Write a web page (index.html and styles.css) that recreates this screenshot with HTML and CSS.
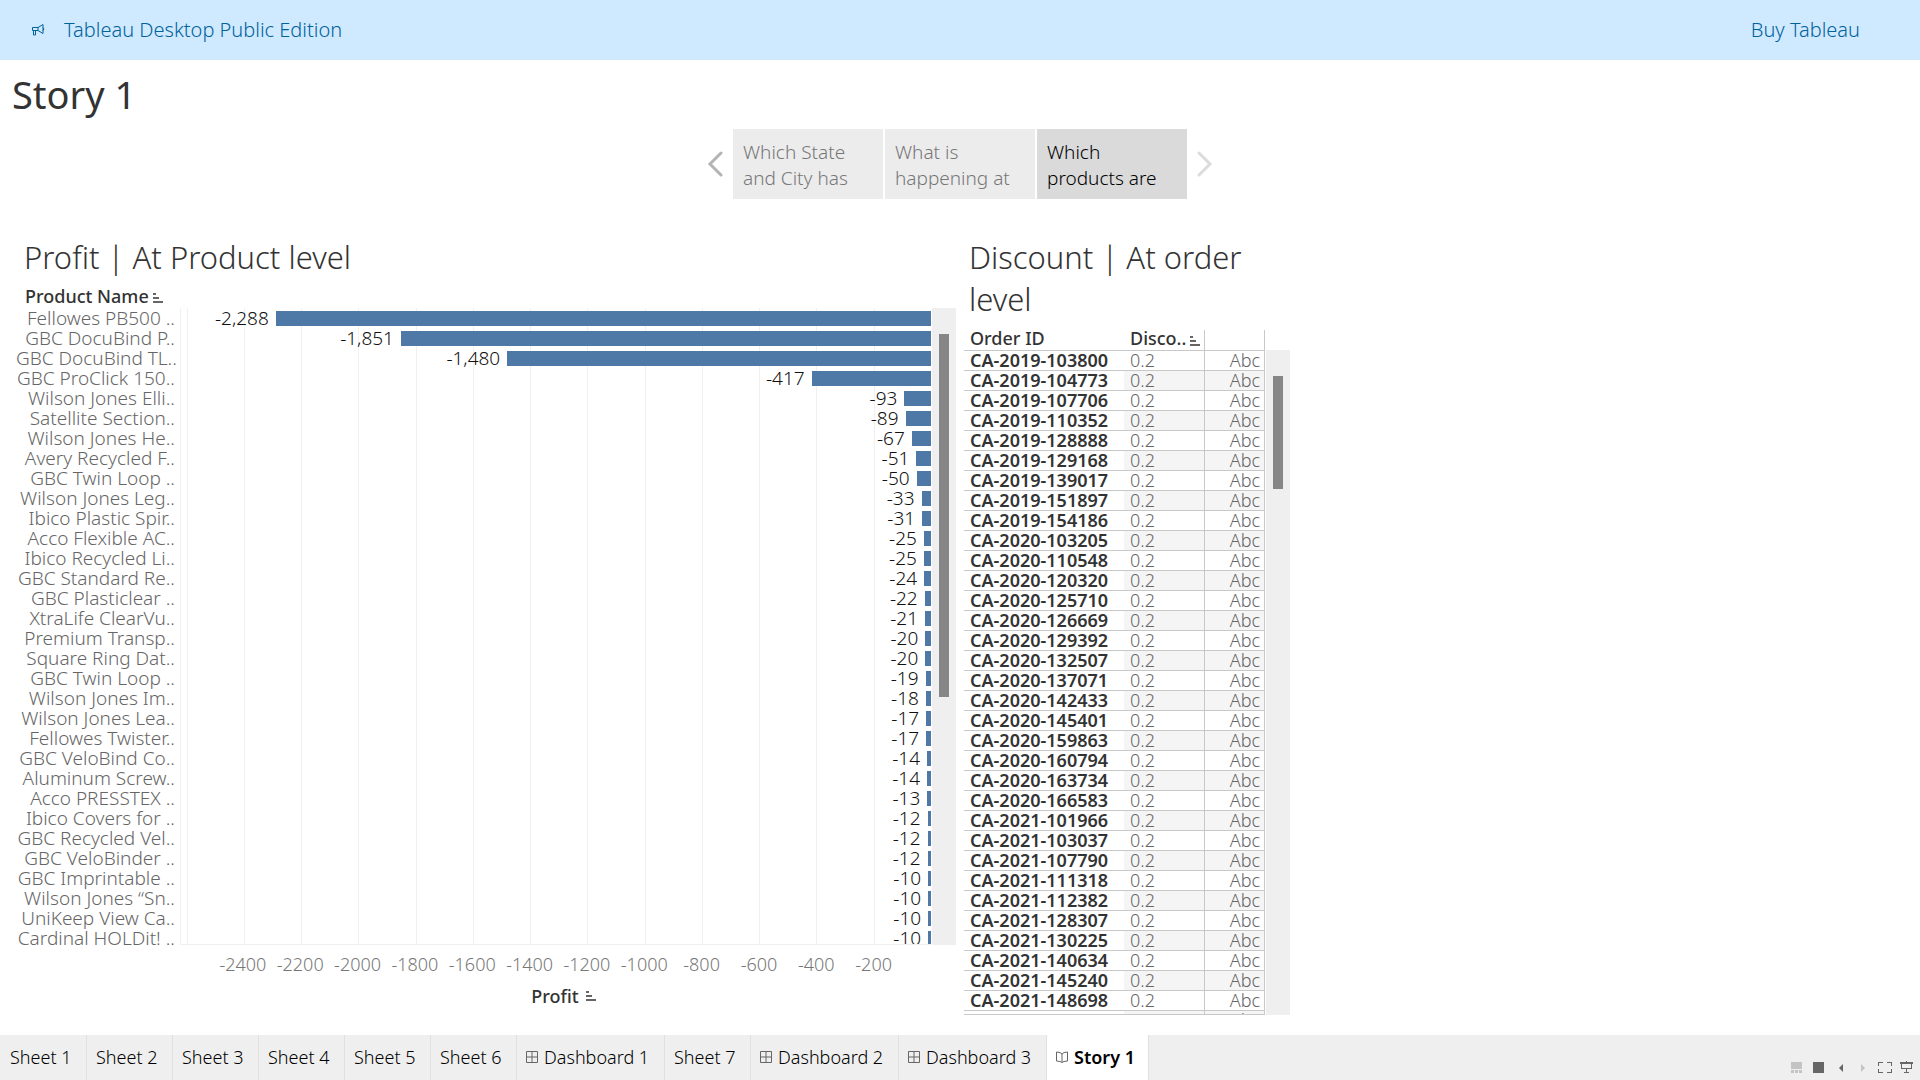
FILE: index.html
```html
<!DOCTYPE html>
<html lang="en">
<head>
<meta charset="utf-8">
<meta name="viewport" content="width=device-width, initial-scale=1">
<title>Story 1</title>
<link rel="stylesheet" href="styles.css">
</head>
<body>
<div class="app">
  <header class="banner">
    <svg class="banner-icon" viewBox="0 0 14 14" width="14" height="14" aria-hidden="true"><path d="M1.500 4.500H7L12 1.500v9L7 7.500H1.500zM7 4.500v3M2.500 7.500v4.500h2V7.500M12 4.500q2 1.500 0 3"/></svg>
    <span class="banner-title">Tableau Desktop Public Edition</span>
    <a class="banner-link" href="#buy">Buy Tableau</a>
  </header>

  <main class="story">
    <h1 class="story-title">Story 1</h1>

    <nav class="points" aria-label="Story points">
      <button class="point-arrow" type="button" aria-label="Previous"><svg viewBox="0 0 16 26" width="16" height="26"><path d="M14 2L3 13l11 11"/></svg></button>
      <div class="point-list">
        <button class="point" type="button">Which State<br>and City has</button>
        <button class="point" type="button">What is<br>happening at</button>
        <button class="point point-active" type="button">Which<br>products are</button>
      </div>
      <button class="point-arrow" type="button" aria-label="Next" disabled><svg viewBox="0 0 16 26" width="16" height="26"><path d="M2 2l11 11L2 24"/></svg></button>
    </nav>

    <div class="sheets">
      <section class="sheet profit">
        <h2 class="sheet-title">Profit | At Product level</h2>
        <div class="field-head">Product Name<svg class="sort" viewBox="0 0 10 10" width="10" height="10" aria-hidden="true"><path d="M0 0h3v2H0zM0 4h6v2H0zM0 8h10v2H0z"/></svg></div>
        <div class="chart">
          <div class="names" id="names"></div>
          <div class="plot">
            <div class="grid" id="grid"></div>
            <div class="bars" id="bars"></div>
          </div>
          <div class="track"><div class="thumb thumb-long"></div></div>
        </div>
        <div class="axis"><div class="ticks" id="ticks"></div></div>
        <div class="axis-title">Profit<svg class="sort" viewBox="0 0 10 10" width="10" height="10" aria-hidden="true"><path d="M0 0h3v2H0zM0 4h6v2H0zM0 8h10v2H0z"/></svg></div>
      </section>

      <section class="sheet discount">
        <h2 class="sheet-title">Discount | At order level</h2>
        <div class="orders">
          <div class="orders-view">
            <table class="orders-table">
              <thead><tr><th class="col-id" scope="col">Order ID</th><th class="col-disc" scope="col"><span class="disc-head">Disco..<svg class="sort" viewBox="0 0 10 10" width="10" height="10" aria-hidden="true"><path d="M0 0h3v2H0zM0 4h6v2H0zM0 8h10v2H0z"/></svg></span></th><td class="col-abc"></td></tr></thead>
              <tbody id="orders"></tbody>
            </table>
          </div>
          <div class="track track-orders"><div class="thumb thumb-short"></div></div>
        </div>
      </section>
    </div>
  </main>

  <footer class="footer">
    <nav class="tabs" aria-label="Sheets">
      <a class="tab" href="#s1">Sheet 1</a>
      <a class="tab" href="#s2">Sheet 2</a>
      <a class="tab" href="#s3">Sheet 3</a>
      <a class="tab" href="#s4">Sheet 4</a>
      <a class="tab" href="#s5">Sheet 5</a>
      <a class="tab" href="#s6">Sheet 6</a>
      <a class="tab tab-dash" href="#d1"><svg class="tab-icon" viewBox="0 0 12 12" width="12" height="12"><path d="M.5.5h11v11H.5zM6 .5v11M.5 6h11"/></svg>Dashboard 1</a>
      <a class="tab" href="#s7">Sheet 7</a>
      <a class="tab tab-dash" href="#d2"><svg class="tab-icon" viewBox="0 0 12 12" width="12" height="12"><path d="M.5.5h11v11H.5zM6 .5v11M.5 6h11"/></svg>Dashboard 2</a>
      <a class="tab tab-dash" href="#d3"><svg class="tab-icon" viewBox="0 0 12 12" width="12" height="12"><path d="M.5.5h11v11H.5zM6 .5v11M.5 6h11"/></svg>Dashboard 3</a>
      <a class="tab tab-active" href="#st1" aria-current="page"><svg class="tab-icon" viewBox="0 0 12 12" width="12" height="12"><path d="M.5 1L4 1.500 6 3l2-1.500L11.500 1v9L8 10.500 6 11.500 4 10.500.5 10zM6 3v8"/></svg>Story 1</a>
    </nav>
    <div class="tools">
      <button class="tool tool-off" type="button" aria-label="Show filmstrip"><svg viewBox="0 0 11 11" width="11" height="11"><path d="M0 0h11v7H0zM0 8h3v3H0zM4 8h3v3H4zM8 8h3v3H8z"/></svg></button>
      <button class="tool" type="button" aria-label="Show tabs"><svg viewBox="0 0 11 11" width="11" height="11"><path d="M0 0h11v11H0z"/></svg></button>
      <button class="tool" type="button" aria-label="Previous sheet"><svg viewBox="0 0 11 11" width="11" height="11"><path d="M8 2v8L4 6z"/></svg></button>
      <button class="tool tool-off" type="button" aria-label="Next sheet"><svg viewBox="0 0 11 11" width="11" height="11"><path d="M4 2v8l4-4z"/></svg></button>
      <button class="tool" type="button" aria-label="Full screen"><svg viewBox="0 0 14 11" width="14" height="11"><path d="M0 0h5v1H1v3H0zM9 0h5v4h-1V1H9zM0 7h1v3h4v1H0zM13 7h1v4H9v-1h4z"/></svg></button>
      <button class="tool" type="button" aria-label="Presentation mode"><svg viewBox="0 0 13 12" width="13" height="12"><path d="M6 0h1v1h6v2h-1v5H7v3h2v1H4v-1h2V8H1V3H0V1h6zM2 3v4h9V3z" fill-rule="evenodd"/></svg></button>
    </div>
  </footer>
</div>
<script src="script.js"></script>
</body>
</html>
```
FILE: styles.css
```css
* { box-sizing: border-box; }

body {
  margin: 0;
  font: 300 18px/20px "Noto Sans", "Open Sans", sans-serif;
  color: #333;
  background: #fff;
}

button { font: inherit; border: 0; padding: 0; background: none; }

.app { display: flex; flex-direction: column; height: 100vh; }

.banner {
  display: flex;
  align-items: center;
  gap: 19px;
  height: 60px;
  padding: 0 60px 0 31px;
  background: #cfe9ff;
  color: #00629b;
  font-size: 20px;
}
.banner-icon { fill: none; stroke: #00629b; }
.banner-link { margin-left: auto; color: inherit; text-decoration: none; }

.story { flex: 1; min-height: 0; display: flex; flex-direction: column; padding-bottom: 20px; }
.story-title { margin: 9px 12px 10px; font-size: 38px; line-height: 50px; font-weight: 400; }

.points { display: flex; justify-content: center; align-items: center; gap: 10px; }
.point-arrow { display: flex; }
.point-arrow svg { fill: none; stroke: #b4b4b4; stroke-width: 3; stroke-linecap: round; }
.point-arrow:disabled svg { stroke: #dcdcdc; }
.point-list { display: flex; gap: 2px; }
.point {
  width: 150px;
  height: 70px;
  padding: 10px 10px 8px;
  text-align: left;
  font-size: 19px;
  line-height: 26px;
  background: #ececec;
  color: #777;
}
.point-active { background: #dadada; color: #000; }

.sheets {
  flex: 1;
  min-height: 0;
  display: grid;
  grid-template-columns: 470fr 163fr 303fr;
  grid-template-rows: minmax(0, 1fr);
  column-gap: 8px;
  padding: 37px 16px 0;
}
.sheet { display: flex; flex-direction: column; min-width: 0; min-height: 0; }
.sheet-title { margin: 0; font-size: 31px; line-height: 42px; font-weight: 300; }
.profit .sheet-title { padding-left: 8px; }
.discount .sheet-title { padding-left: 5px; }
.sort { fill: #666; }

.field-head { display: flex; align-items: flex-end; gap: 4px; padding: 8px 0 2px 9px; font-weight: 500; }
.field-head .sort { margin-bottom: 3px; }

.chart { flex: 1; min-height: 0; display: flex; overflow: hidden; font-size: 19px; }
.names { width: 164px; padding-right: 5px; text-align: right; color: #666; white-space: nowrap; }
.plot { flex: 1; position: relative; border-left: 1px solid #f0f0f0; border-bottom: 1px solid #f0f0f0; overflow: hidden; }
.grid { position: absolute; inset: 0; display: flex; justify-content: flex-end; }
.grid-cell { flex: none; border-left: 1px solid #f0f0f0; }
.bars { position: relative; color: #111; }
.bar-row { display: flex; justify-content: flex-end; align-items: center; gap: 7px; height: 20px; }
.bar-value { line-height: 22px; }
.bar { height: 15px; background: #4e79a7; }

.track { width: 24px; margin-left: 1px; padding: 26px 7px; background: #efefef; }
.thumb { background: #868686; }
.thumb-long { height: 62%; }
.thumb-short { height: 18.5%; }

.axis { padding: 0 25px 0 164px; }
.ticks { display: flex; justify-content: flex-end; padding-top: 9px; color: #777; }
.tick { flex: none; display: flex; justify-content: center; }
.axis-title {
  display: flex;
  justify-content: center;
  align-items: center;
  gap: 7px;
  padding: 12px 9px 9px 164px;
  font-weight: 500;
}

.orders { flex: 1; min-height: 0; display: flex; padding-top: 10px; }
.orders-view { flex: 1; overflow: hidden; border-bottom: 1px solid #c8c8c8; }
.orders-table { width: 100%; table-layout: fixed; border-spacing: 0; }
.orders-table th, .orders-table td { height: 20px; padding: 0 4px 0 6px; line-height: 19px; text-align: left; }
.orders-table thead th { padding-bottom: 4px; line-height: 16px; }
.orders-table tbody th, .orders-table tbody td { border-top: 1px solid #c8c8c8; }
.orders-table th { font-weight: 500; }
.orders-table tbody th { font-weight: 600; }
.orders-table td { color: #666; }
.orders-table .col-abc { width: 61px; text-align: right; border-left: 1px solid #c8c8c8; border-right: 1px solid #c8c8c8; }
.orders-table .col-disc { width: 80px; }
.orders-table tbody tr:nth-child(even) td { background: #f5f5f5; }
.disc-head { display: flex; justify-content: space-between; align-items: flex-end; white-space: nowrap; }
.disc-head .sort { flex: none; }
.track-orders { margin-top: 20px; }

.footer { display: flex; justify-content: space-between; height: 45px; background: #efefef; }
.tabs { display: flex; padding-left: 1px; }
.tab {
  display: flex;
  align-items: center;
  gap: 6px;
  min-width: 86px;
  padding: 0 9px 2px;
  border-right: 1px solid #e0e0e0;
  color: #000;
  text-decoration: none;
  white-space: nowrap;
}
.tab-dash { width: 148px; }
.tab-active { width: 102px; background: #fff; font-weight: 600; }
.tab-icon { fill: none; stroke: #666; }
.tools { display: flex; align-items: flex-end; gap: 7px; padding: 0 6px 7px 0; }
.tool { display: flex; justify-content: center; min-width: 15px; }
.tool svg { fill: #666; }
.tool-off svg { fill: #c4c4c4; }
```
FILE: script.js
```js
const products = [
  ["Fellowes PB500 ..", 2288], ["GBC DocuBind P..", 1851], ["GBC DocuBind TL..", 1480],
  ["GBC ProClick 150..", 417], ["Wilson Jones Elli..", 93], ["Satellite Section..", 89],
  ["Wilson Jones He..", 67], ["Avery Recycled F..", 51], ["GBC Twin Loop ..", 50],
  ["Wilson Jones Leg..", 33], ["Ibico Plastic Spir..", 31], ["Acco Flexible AC..", 25],
  ["Ibico Recycled Li..", 25], ["GBC Standard Re..", 24], ["GBC Plasticlear ..", 22],
  ["XtraLife ClearVu..", 21], ["Premium Transp..", 20], ["Square Ring Dat..", 20],
  ["GBC Twin Loop ..", 19], ["Wilson Jones Im..", 18], ["Wilson Jones Lea..", 17],
  ["Fellowes Twister..", 17], ["GBC VeloBind Co..", 14], ["Aluminum Screw..", 14],
  ["Acco PRESSTEX ..", 13], ["Ibico Covers for ..", 12], ["GBC Recycled Vel..", 12],
  ["GBC VeloBinder ..", 12], ["GBC Imprintable ..", 10], ["Wilson Jones “Sn..", 10],
  ["UniKeep View Ca..", 10], ["Cardinal HOLDit! ..", 10]
];
const orders = [
  "2019-103800", "2019-104773", "2019-107706", "2019-110352", "2019-128888", "2019-129168",
  "2019-139017", "2019-151897", "2019-154186", "2020-103205", "2020-110548", "2020-120320",
  "2020-125710", "2020-126669", "2020-129392", "2020-132507", "2020-137071", "2020-142433",
  "2020-145401", "2020-159863", "2020-160794", "2020-163734", "2020-166583", "2021-101966",
  "2021-103037", "2021-107790", "2021-111318", "2021-112382", "2021-128307", "2021-130225",
  "2021-140634", "2021-145240", "2021-148698", ""
];
const range = 2619;
const step = 200 / range * 100;
const fill = (id, html) => { document.getElementById(id).innerHTML = html; };

fill("names", products.map(([name]) => `<div>${name}</div>`).join(""));
fill("bars", products.map(([, loss]) =>
  `<div class="bar-row"><span class="bar-value">-${loss.toLocaleString("en-US")}</span><div class="bar" style="width:${loss / range * 100}%"></div></div>`).join(""));

let cells = "";
let ticks = "";
for (let v = 2600; v >= 200; v -= 200) {
  cells += `<div class="grid-cell" style="width:${step}%"></div>`;
  if (v < 2600) ticks += `<span class="tick" style="width:${step}%">-${v}</span>`;
}
fill("grid", cells);
fill("ticks", ticks + `<span style="width:${step / 2}%"></span>`);

fill("orders", orders.map(id => id
  ? `<tr><th scope="row">CA-${id}</th><td>0.2</td><td class="col-abc">Abc</td></tr>`
  : `<tr><th></th><td></td><td class="col-abc">Abc</td></tr>`).join(""));
```
